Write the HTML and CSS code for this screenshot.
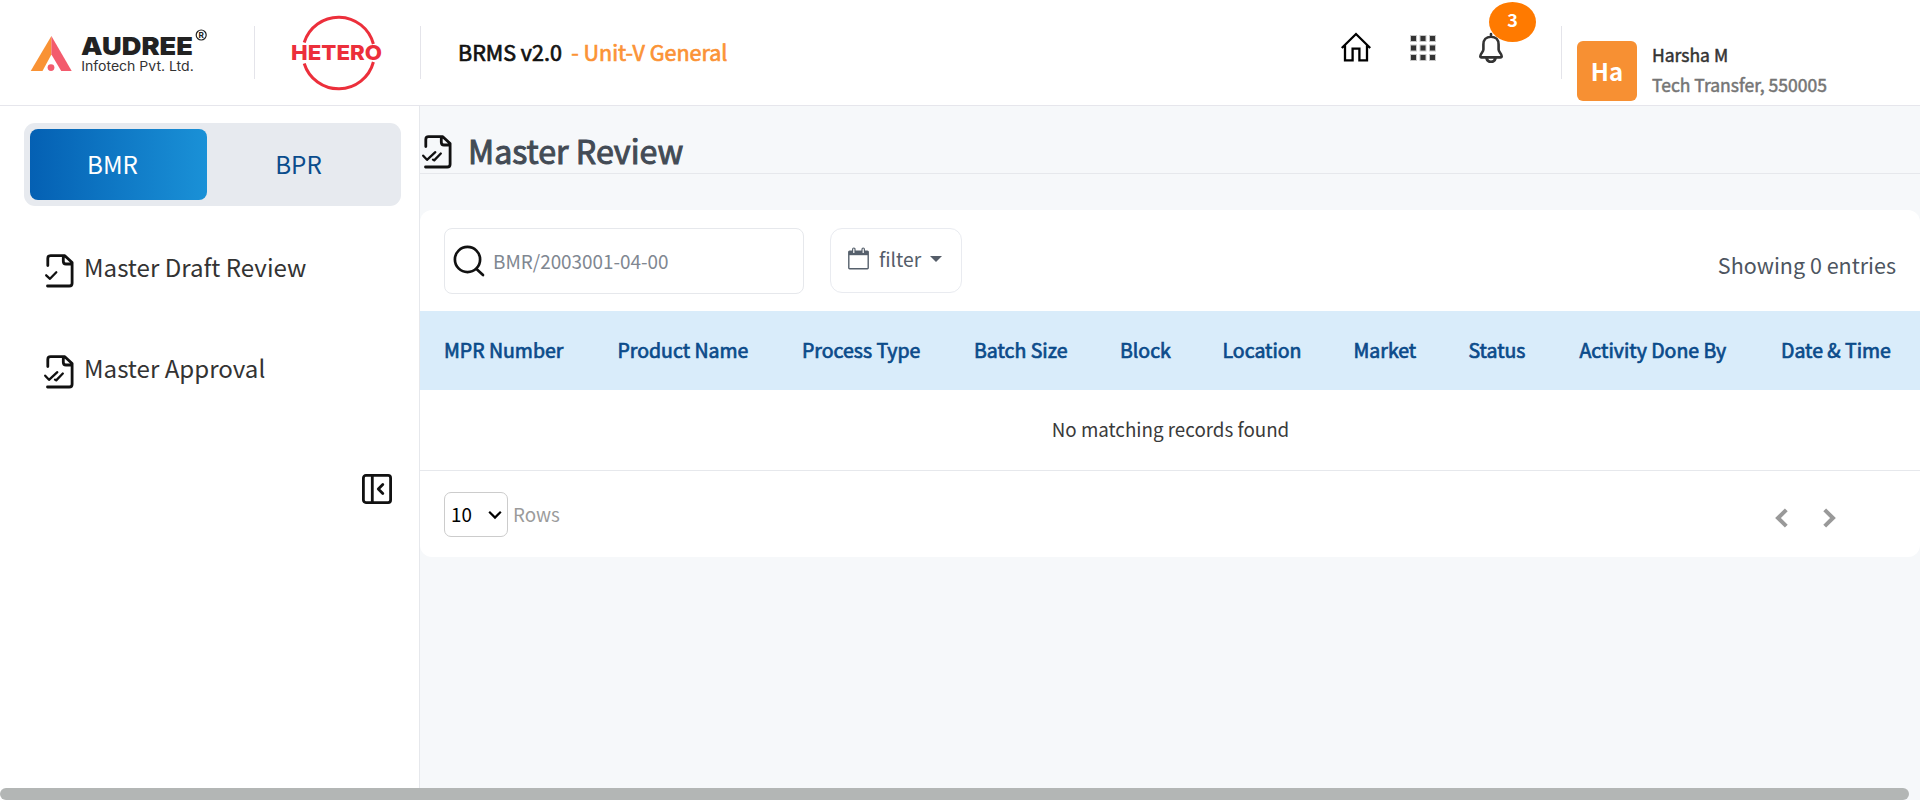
FILE: index.html
```html
<!DOCTYPE html>
<html lang="en">
<head>
<meta charset="utf-8">
<title>BRMS v2.0 - Master Review</title>
<link rel="stylesheet" href="styles.css">
</head>
<body>
<svg class="sprite" aria-hidden="true">
  <symbol id="doc" viewBox="0 0 31 36">
    <path d="M3.8 12.5V5.5Q3.8 2.7 6.6 2.7H20.8L28.1 9.6V30.2Q28.1 33 25.3 33H3.5M19.3 2.7V8.2Q19.3 11 22 11H28.1" fill="none" stroke="#111" stroke-width="2.8" stroke-linecap="round" stroke-linejoin="round"/>
  </symbol>
</svg>
<header class="topbar">
  <svg class="audree" width="180" height="50" viewBox="0 0 180 50">
    <path d="M20.4 8V26.5L11.5 43H-.3Z" fill="#f99234"/>
    <path d="M20.4 8L40.7 43H30.2L20.4 26.5Z" fill="#f35b6d"/>
    <circle cx="20" cy="39.6" r="3.4" fill="#f35b6d"/>
    <text class="brand-name" x="50" y="26.9" textLength="112" lengthAdjust="spacingAndGlyphs">AUDREE</text>
    <text class="brand-sub" x="50.2" y="42.9" textLength="112.5" lengthAdjust="spacingAndGlyphs">Infotech Pvt. Ltd.</text>
    <circle cx="170.2" cy="7" r="5" fill="none" stroke="#222" stroke-width="1.2"/>
    <text class="brand-reg" x="167.6" y="10.1">R</text>
  </svg>
  <span class="rule rule-a"></span>
  <svg class="hetero" width="92" height="78" viewBox="0 0 92 78">
    <path d="M13.2 29.5A36 36 0 0 1 82.4 31M13.2 50.5A36 36 0 0 0 82.4 49" fill="none" stroke="#ec2f3b" stroke-width="3"/>
    <text class="hetero-name" x="0" y="47.4" textLength="91" lengthAdjust="spacingAndGlyphs">HETERO</text>
  </svg>
  <span class="rule rule-b"></span>
  <h1 class="app">BRMS v2.0 <span>- Unit-V General</span></h1>
  <nav class="tools">
    <svg width="32" height="32" viewBox="0 0 32 32" fill="none" stroke="#000" stroke-width="2.3">
      <path d="M1.8 17L16 3L30.2 17M5 14.5V29.3H12.6V17.6H19.4V29.3H27V14.5"/>
    </svg>
    <svg class="grid-icon" width="26" height="26" viewBox="0 0 26 26" fill="#333" stroke="#c8c8c8" stroke-width="1">
      <rect x=".5" y=".5" width="6" height="6"/><rect x="10" y=".5" width="6" height="6"/><rect x="19.5" y=".5" width="6" height="6"/>
      <rect x=".5" y="10" width="6" height="6"/><rect x="10" y="10" width="6" height="6"/><rect x="19.5" y="10" width="6" height="6"/>
      <rect x=".5" y="19.5" width="6" height="6"/><rect x="10" y="19.5" width="6" height="6"/><rect x="19.5" y="19.5" width="6" height="6"/>
    </svg>
    <div class="bell">
      <svg width="26" height="32" viewBox="0 0 26 32" fill="none" stroke="#333" stroke-width="2.6" stroke-linecap="round" stroke-linejoin="round">
        <path d="M13 2V4.8M13 4.8C8 4.8 5.4 8 5.4 12.5V17.5C5.4 20 2.3 21.5 2.3 24.3Q2.3 25.4 3.6 25.4H22.4Q23.7 25.4 23.7 24.3C23.7 21.5 20.6 20 20.6 17.5V12.5C20.6 8 18 4.8 13 4.8ZM8.3 26Q9.5 29.8 13 29.8T17.7 26"/>
      </svg>
      <span class="badge">3</span>
    </div>
  </nav>
  <span class="rule rule-c"></span>
  <div class="avatar">Ha</div>
  <div class="user"><div class="user-name">Harsha M</div><div class="user-role">Tech Transfer, 550005</div></div>
</header>
<div class="body">
  <aside class="side">
    <div class="switch"><div class="seg seg-on">BMR</div><div class="seg seg-off">BPR</div></div>
    <a class="item">
      <svg width="31" height="36" viewBox="0 0 31 36"><use href="#doc"/><path class="tick" d="M2.2 22.3L6 25.8L12.3 19.3"/></svg>
      <span>Master Draft Review</span>
    </a>
    <a class="item">
      <svg width="31" height="36" viewBox="0 0 31 36"><use href="#doc"/><path class="tick" d="M1.2 21.7L5 25.8L13.3 18.2M11 25.6L12.2 26.4L18.8 19.5"/></svg>
      <span>Master Approval</span>
    </a>
    <svg class="collapse" width="30" height="30" viewBox="0 0 30 30" fill="none" stroke="#111" stroke-width="2.8" stroke-linejoin="round" stroke-linecap="round">
      <rect x="1.4" y="1.4" width="27.2" height="27.2" rx="2.5"/><path d="M10.3 1.5V28.5M20.8 10.5L16.3 15L20.8 19.5"/>
    </svg>
  </aside>
  <main class="main">
    <div class="title">
      <svg width="31" height="36" viewBox="0 0 31 36"><use href="#doc"/><path class="tick" d="M1.2 21.7L5 25.8L13.3 18.2M11 25.6L12.2 26.4L18.8 19.5"/></svg>
      <h2>Master Review</h2>
    </div>
    <section class="card">
      <div class="bar">
        <div class="search">
          <svg width="32" height="32" viewBox="0 0 32 32" fill="none" stroke="#111" stroke-width="2.7" stroke-linecap="round"><circle cx="14.5" cy="14.5" r="12.6"/><path d="M23.5 24L30 30"/></svg>
          <span>BMR/2003001-04-00</span>
        </div>
        <div class="filter">
          <svg width="21" height="23" viewBox="0 0 21 23"><path d="M1.6 4.2H19.4Q20.2 4.2 20.2 5V21Q20.2 21.7 19.4 21.7H1.6Q.8 21.7 .8 21V5Q.8 4.2 1.6 4.2Z" fill="#fff" stroke="#56606c" stroke-width="1.4"/><path d="M.8 4H20.2V8.2H.8Z" fill="#56606c"/><path d="M4.6 6V2.4Q4.6 1 5.8 1T7 2.4V6M14 6V2.4Q14 1 15.2 1T16.4 2.4V6" fill="#fff" stroke="#56606c" stroke-width="1.2"/></svg>
          <span>filter</span>
          <i class="caret"></i>
        </div>
        <div class="count">Showing 0 entries</div>
      </div>
      <table class="grid">
        <colgroup><col class="c1"><col class="c2"><col class="c3"><col class="c4"><col class="c5"><col class="c6"><col class="c7"><col class="c8"><col class="c9"><col></colgroup>
        <thead><tr><th>MPR Number</th><th>Product Name</th><th>Process Type</th><th>Batch Size</th><th>Block</th><th>Location</th><th>Market</th><th>Status</th><th>Activity Done By</th><th>Date &amp; Time</th></tr></thead>
        <tbody><tr><td colspan="10">No matching records found</td></tr></tbody>
      </table>
      <div class="foot">
        <div class="select"><span>10</span><svg width="14" height="10" viewBox="0 0 14 10" fill="none" stroke="#000" stroke-width="2.2"><path d="M1.2 1.8L7 7.6L12.8 1.8"/></svg></div>
        <span class="rows">Rows</span>
        <div class="pager">
          <svg width="13" height="20" viewBox="0 0 13 20" fill="none" stroke="#999" stroke-width="4"><path d="M11.3 1.8L3 10L11.3 18.2"/></svg>
          <svg width="13" height="20" viewBox="0 0 13 20" fill="none" stroke="#999" stroke-width="4"><path d="M1.7 1.8L10 10L1.7 18.2"/></svg>
        </div>
      </div>
    </section>
  </main>
</div>
<div class="scroll"><div class="thumb"></div></div>
</body>
</html>
```
FILE: styles.css
```css
* { box-sizing: border-box; }
html, body { margin: 0; height: 800px; overflow: hidden; }
body { font-family: "Noto Sans CJK SC", "Noto Sans", sans-serif; color: #333; background: #fff; display: flex; flex-direction: column; }
svg { display: block; flex: none; overflow: visible; }
.sprite { width: 0; height: 0; position: absolute; }
h1, h2 { margin: 0; font-weight: 400; }
.tick { fill: none; stroke: #111; stroke-width: 2.3; stroke-linecap: round; stroke-linejoin: round; }

.topbar { height: 106px; flex: none; border-bottom: 1px solid #e6e6ec; display: flex; align-items: flex-start; }
.audree { margin: 28px 0 0 31px; }
.brand-name { font: 900 25px Inter, sans-serif; fill: #222; }
.brand-sub { font: 400 13.4px Inter, sans-serif; fill: #333; }
.brand-reg { font: 700 8.2px Inter, sans-serif; fill: #222; }
.rule { width: 1px; height: 53px; margin-top: 26px; background: #e4e4ea; flex: none; }
.rule-a { margin-left: 43px; }
.hetero { margin: 13px 0 0 36px; }
.hetero-name { font: 800 20.8px Inter, sans-serif; fill: #ec2f3b; }
.rule-b { margin-left: 37px; }
.app { margin: 37px 0 0 37px; width: 320px; font-size: 21.5px; line-height: 30px; color: #111; white-space: nowrap; -webkit-text-stroke: .7px currentColor; }
.app span { color: #fb9336; margin-left: 4.5px; }
.tools { display: flex; align-items: flex-start; margin: 31px 0 0 562px; }
.grid-icon { margin: 4px 0 0 38px; }
.bell { position: relative; margin: 1px 0 0 42px; }
.badge { position: absolute; left: 11px; top: -30px; width: 47px; height: 40px; border-radius: 50%; background: #ff7a00; color: #fff; font-size: 18px; font-weight: 700; line-height: 35px; text-align: center; }
.rule-c { margin-left: 57px; }
.avatar { width: 60px; height: 60px; margin: 41px 0 0 15px; border-radius: 6px; background: #f79033; color: #fff; font-size: 24px; font-weight: 700; line-height: 60px; text-align: center; flex: none; }
.user { margin: 40px 0 0 15px; font-size: 17.5px; line-height: 30px; white-space: nowrap; -webkit-text-stroke: .5px currentColor; }
.user-role { color: #757575; }

.body { display: flex; height: 682px; flex: none; }
.side { width: 420px; border-right: 1px solid #e6e8ec; padding: 17px 18px 0 24px; display: flex; flex-direction: column; }
.switch { height: 83px; padding: 6px; border-radius: 11px; background: #e7eaef; display: flex; font-size: 24.2px; line-height: 69px; text-align: center; }
.seg { height: 71px; }
.seg-on { width: 177px; padding-right: 12px; border-radius: 8px; color: #fff; background: linear-gradient(90deg, #0460b3, #1a91d7); }
.seg-off { width: 183px; color: #0a4c8c; }
.item { display: flex; align-items: flex-start; padding-left: 20px; height: 36px; font-size: 24.1px; line-height: 36px; }
.item span { margin: -4px 0 0 9px; white-space: nowrap; }
.item + .item { margin-top: 65px; }
.switch + .item { margin-top: 47px; }
.collapse { margin: 84px 9px 0 auto; }

.main { width: 1500px; background: #f6f8fa; }
.title { height: 68px; border-bottom: 1px solid #e6e8ec; padding: 28px 0 0 2px; display: flex; }
.title h2 { margin: -2px 0 0 15px; font-size: 32.2px; line-height: 36px; color: #434b55; -webkit-text-stroke: 1px currentColor; }
.card { margin-top: 36px; height: 347px; background: #fff; border-radius: 12px; }
.bar { height: 101px; padding: 18px 24px 0; display: flex; align-items: flex-start; }
.search { width: 360px; height: 66px; border: 1px solid #e6e8ec; border-radius: 8px; display: flex; padding: 16px 0 0 8px; font-size: 18.9px; line-height: 32px; color: #808791; }
.search span { margin-left: 8px; }
.filter { width: 132px; height: 65px; margin-left: 26px; border: 1px solid #e9ebf0; border-radius: 12px; display: flex; padding: 18px 0 0 17px; font-size: 19.3px; line-height: 24px; color: #555d69; }
.filter span { margin: 0 9px 0 10px; }
.caret { margin-top: 9px; width: 12px; height: 6px; border: 6px solid transparent; border-top-color: #555d69; border-bottom: 0; }
.count { margin: 22px 0 0 auto; font-size: 21.5px; line-height: 30px; color: #4d5560; }

.grid { width: 1500px; table-layout: fixed; border-collapse: separate; border-spacing: 0; }
.grid th { height: 79px; padding: 0 0 1px 24px; text-align: left; font-size: 19.5px; font-weight: 400; line-height: 30px; color: #0b4b8a; background: #d9ecfa; white-space: nowrap; -webkit-text-stroke: .7px currentColor; }
.grid td { height: 81px; padding: 0 0 3px 1px; text-align: center; font-size: 18.8px; line-height: 30px; color: #3a3a3a; border-bottom: 1px solid #e6e8ec; }
.c1 { width: 173.5px; } .c2 { width: 184.5px; } .c3 { width: 172px; } .c4 { width: 146px; } .c5 { width: 102.5px; }
.c6 { width: 131px; } .c7 { width: 115px; } .c8 { width: 111px; } .c9 { width: 201.5px; }
.foot { display: flex; align-items: flex-start; padding: 21px 84px 0 24px; font-size: 18.8px; line-height: 30px; }
.select { width: 64px; height: 45px; border: 1px solid #ccc; border-radius: 7px; color: #000; padding: 6px 5px 6px 6px; display: flex; justify-content: space-between; }
.select svg { margin-top: 11px; }
.rows { margin: 7px 0 0 5px; color: #9b9b9b; }
.pager { margin: 16px 0 0 auto; display: flex; gap: 35px; }

.scroll { height: 12px; background: linear-gradient(90deg, #fff 50%, #f6f8fa 50%); flex: none; }
.thumb { width: 1909px; height: 12px; border-radius: 6px; background: #b3b6b5; }
```
